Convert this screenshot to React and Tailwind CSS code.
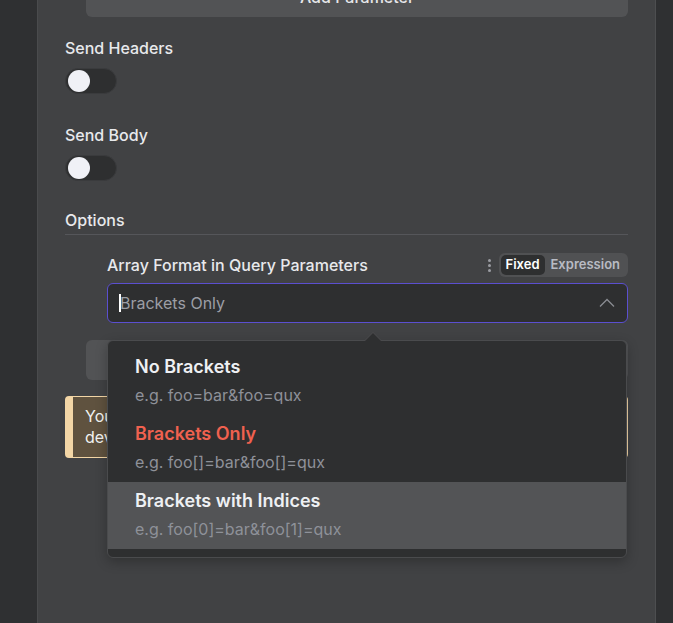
import React from "react";

function Toggle() {
  return (
    <div className="w-[52px] h-[26px] rounded-full bg-[#2e2f30] border border-[#3a3b3d] flex items-center px-[2px]">
      <div className="w-[22px] h-[22px] rounded-full bg-[#f0f1f6]" />
    </div>
  );
}

function Item({ title, sub, active, hover }) {
  return (
    <div className={`pl-[27px] pt-[8px] pb-[10px] ${hover ? "bg-[#535456]" : ""}`}>
      <div className={`text-[18px] leading-[22px] font-semibold ${active ? "text-[#f0614f]" : "text-[#eef0f3]"}`}>{title}</div>
      <div className="mt-[7px] text-[16px] leading-[20px] text-[#8e9199]">{sub}</div>
    </div>
  );
}

export default function App() {
  return (
    <div className="flex h-[623px] w-[673px] overflow-hidden bg-[#2f3032]" style={{ fontFamily: "Inter, 'Noto Sans', sans-serif" }}>
      <div className="w-[38px] bg-[#2f3032] border-r border-[#4a4b4d] shrink-0" />
      <div className="w-[618px] shrink-0 bg-[#414244] border-r border-[#4d4e50] pl-[27px] pr-[27px] flex flex-col">
        <div className="ml-[21px] mt-[-23px] h-[40px] rounded-[6px] bg-[#525355] flex items-center justify-center text-[16px] font-medium text-[#e6e7ea]">
          Add Parameter
        </div>

        <div className="mt-[21px] text-[16px] leading-[20px] font-medium text-[#e8e9ec]">Send Headers</div>
        <div className="mt-[10px]"><Toggle /></div>

        <div className="mt-[31px] text-[16px] leading-[20px] font-medium text-[#e8e9ec]">Send Body</div>
        <div className="mt-[10px]"><Toggle /></div>

        <div className="mt-[29px] text-[16px] leading-[20px] font-medium text-[#e8e9ec] pb-[4px] border-b border-[#55565a]">Options</div>

        <div className="ml-[42px] mt-[18px] flex flex-col">
          <div className="flex items-center h-[24px]">
            <div className="text-[16px] font-medium text-[#e8e9ec]">Array Format in Query Parameters</div>
            <div className="ml-auto mr-[8px] flex flex-col gap-[2px] items-center">
              <div className="w-[3px] h-[3px] rounded-full bg-[#9b9da3]" />
              <div className="w-[3px] h-[3px] rounded-full bg-[#9b9da3]" />
              <div className="w-[3px] h-[3px] rounded-full bg-[#9b9da3]" />
            </div>
            <div className="h-[24px] rounded-[6px] bg-[#505153] flex items-center p-[2px] text-[13px] font-semibold">
              <div className="h-[20px] px-[5px] rounded-[5px] bg-[#2e2f30] text-white flex items-center">Fixed</div>
              <div className="px-[6px] text-[#b8bbc3]">Expression</div>
            </div>
          </div>

          <div className="relative mt-[6px]">
            <div className="h-[40px] rounded-[6px] border border-[#5b4fd0] bg-[#2e2f30] flex items-center pl-[11px] pr-[12px]">
              <div className="w-[2px] h-[18px] bg-white" />
              <div className="text-[16px] text-[#9c9ea5] ml-[-1px]">Brackets Only</div>
              <svg className="ml-auto" width="16" height="10" viewBox="0 0 16 10" fill="none">
                <path d="M1 8.5 L8 1.5 L15 8.5" stroke="#8a8c92" strokeWidth="1.3" />
              </svg>
            </div>

            <div className="absolute left-0 top-[57px] w-[520px] z-10">
              <div className="absolute top-[-8px] left-[257px] w-0 h-0 border-l-[9px] border-r-[9px] border-b-[9px] border-l-transparent border-r-transparent border-b-[#4a4b4d]" />
              <div className="absolute top-[-7px] left-[258px] w-0 h-0 border-l-[8px] border-r-[8px] border-b-[8px] border-l-transparent border-r-transparent border-b-[#2e2f30]" />
              <div className="bg-[#2e2f30] border border-[#4a4b4d] rounded-[6px] pt-[7px] pb-[8px] shadow-[0_4px_12px_rgba(0,0,0,0.25)]">
                <Item title="No Brackets" sub="e.g. foo=bar&foo=qux" />
                <Item title="Brackets Only" sub="e.g. foo[]=bar&foo[]=qux" active />
                <Item title="Brackets with Indices" sub="e.g. foo[0]=bar&foo[1]=qux" hover />
              </div>
            </div>
          </div>
        </div>

        <div className="ml-[21px] mt-[17px] h-[40px] rounded-[6px] bg-[#525355] flex items-center justify-center text-[16px] font-medium text-[#e6e7ea]">
          Add Option
        </div>

        <div className="mt-[16px] h-[62px] rounded-[4px] border border-[#f3d6a6] border-l-[8px] bg-[#5f523f] pl-[12px] pr-[12px] flex items-center">
          <div className="text-[16px] leading-[21px] text-[#f2f2f2]">
            You can view the raw requests this node makes in your browser's developer console
          </div>
        </div>
      </div>
      <div className="flex-1 bg-[#2f3032]" />
    </div>
  );
}
